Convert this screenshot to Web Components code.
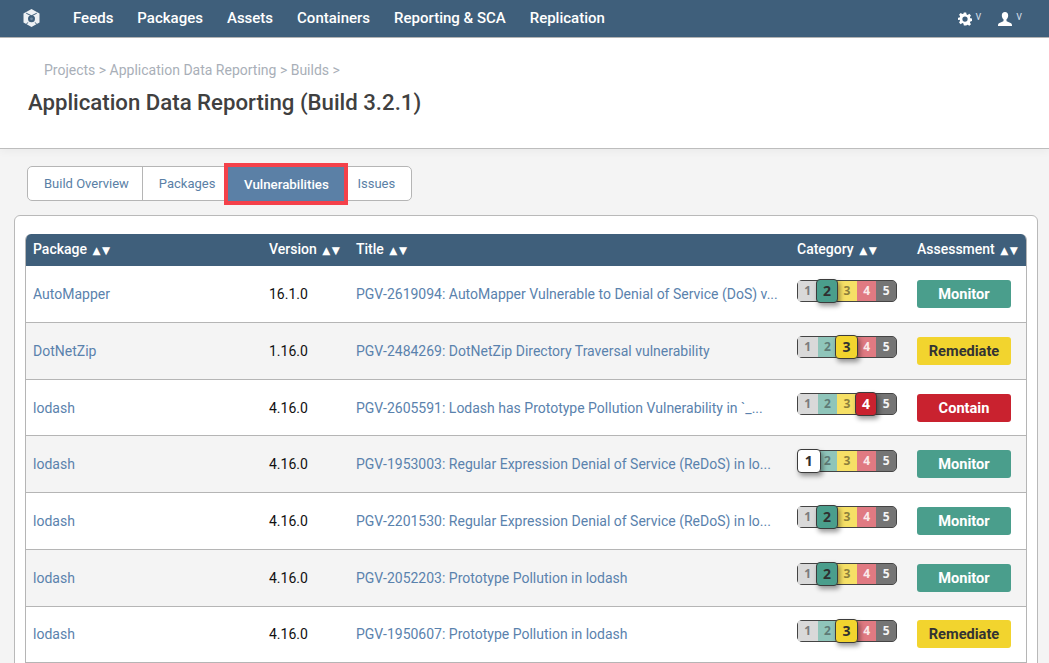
<!DOCTYPE html>
<html lang="en">
<head>
<meta charset="utf-8">
<title>Application Data Reporting</title>
<style>
  html, body { margin: 0; height: 100%; overflow: hidden; }
  body { background: #f4f4f4; font-family: Roboto, "Liberation Sans", sans-serif; }
</style>
</head>
<body>
<app-nav></app-nav>
<page-header></page-header>
<tab-bar></tab-bar>
<vuln-card>
  <vuln-head></vuln-head>
  <vuln-row package="AutoMapper" version="16.1.0" title="PGV-2619094: AutoMapper Vulnerable to Denial of Service (DoS) v..." category="2" assessment="Monitor"></vuln-row>
  <vuln-row package="DotNetZip" version="1.16.0" title="PGV-2484269: DotNetZip Directory Traversal vulnerability" category="3" assessment="Remediate" shaded></vuln-row>
  <vuln-row package="lodash" version="4.16.0" title="PGV-2605591: Lodash has Prototype Pollution Vulnerability in `_..." category="4" assessment="Contain"></vuln-row>
  <vuln-row package="lodash" version="4.16.0" title="PGV-1953003: Regular Expression Denial of Service (ReDoS) in lo..." category="1" assessment="Monitor" shaded></vuln-row>
  <vuln-row package="lodash" version="4.16.0" title="PGV-2201530: Regular Expression Denial of Service (ReDoS) in lo..." category="2" assessment="Monitor"></vuln-row>
  <vuln-row package="lodash" version="4.16.0" title="PGV-2052203: Prototype Pollution in lodash" category="2" assessment="Monitor" shaded></vuln-row>
  <vuln-row package="lodash" version="4.16.0" title="PGV-1950607: Prototype Pollution in lodash" category="3" assessment="Remediate"></vuln-row>
</vuln-card>

<script>
class AppNav extends HTMLElement {
  constructor() {
    super();
    const links = ["Feeds", "Packages", "Assets", "Containers", "Reporting & SCA", "Replication"];
    this.attachShadow({ mode: "open" }).innerHTML = `
    <style>
      :host { display: flex; align-items: center; height: 37px; background: #3f5f7b; border-bottom: 1px solid #b5b5b5; padding-left: 23px; padding-right: 27px; color: #fff; font: 500 15px Roboto, sans-serif; }
      .logo { width: 17px; height: 18px; margin-right: 33px; margin-top: -1px; }
      nav { display: flex; gap: 24px; flex: 1; margin-top: -2px; }
      .tool { display: flex; align-items: center; gap: 3px; margin-left: 16px; }
      .tool span { font-size: 12px; font-weight: 400; color: #c9d6e2; margin-top: -5px; }
    </style>
    <svg class="logo" viewBox="0 0 17 18">
      <path fill="#eef1f4" d="M8.500 0 16.500 4.600v8.800L8.500 18 .5 13.400V4.600Z"/>
      <path fill="none" stroke="#3f5f7b" stroke-width="1" d="M3.200 4.200 8.500 6.800 13.800 4.200M4.800 13.400 3.200 15.600M12.200 13.400l1.600 2.200"/>
      <circle cx="8.500" cy="9.800" r="3.500" fill="#3f5f7b"/>
      <circle cx="8.500" cy="9.800" r="1.400" fill="#6f889f"/>
    </svg>
    <nav>${links.map(l => `<span>${l.replace("&", "&amp;")}</span>`).join("")}</nav>
    <div class="tool">
      <svg width="14" height="14" viewBox="0 0 24 24"><path fill="#fff" fill-rule="evenodd" d="M10 1h4l.7 3.200 1.900.8 2.800-1.800 2.800 2.800-1.800 2.800.8 1.900 3.200.7v4l-3.200.7-.8 1.900 1.800 2.800-2.800 2.800-2.800-1.800-1.900.8L14 23h-4l-.7-3.200-1.900-.8-2.800 1.800-2.800-2.800 1.800-2.800-.8-1.900L-.4 14v-4l3.200-.7.800-1.900L1.800 4.600 4.600 1.800l2.800 1.800 1.900-.8ZM12 7.500a4.500 4.500 0 1 0 0 9 4.500 4.500 0 0 0 0-9Z"/></svg>
      <span>v</span>
    </div>
    <div class="tool">
      <svg width="16" height="14" viewBox="0 0 16 15"><path fill="#fff" d="M8 0c2.200 0 3.400 1.600 3.400 3.700 0 1.700-.8 3.300-1.800 4.100v1.600c0 .6 1 1 2.500 1.600 1.800.7 3.400 1.400 3.400 3.100V15H.5v-.9c0-1.700 1.600-2.400 3.400-3.100 1.500-.6 2.500-1 2.500-1.600V7.800c-1-.8-1.800-2.400-1.800-4.100C4.600 1.600 5.800 0 8 0Z"/></svg>
      <span>v</span>
    </div>`;
  }
}

class PageHeader extends HTMLElement {
  constructor() {
    super();
    this.attachShadow({ mode: "open" }).innerHTML = `
    <style>
      :host { display: block; height: 111px; box-sizing: border-box; background: #fff; border-bottom: 1px solid #bdbdbd; box-shadow: 0 3px 8px rgba(0,0,0,.04); padding: 23px 28px 0; }
      .crumbs { font-size: 14px; line-height: 18px; color: #a9afb8; padding-left: 16px; }
      h1 { margin: 9px 0 0; font: 500 22.2px/28px Roboto, sans-serif; color: #404040; }
    </style>
    <div class="crumbs">Projects &gt; Application Data Reporting &gt; Builds &gt;</div>
    <h1>Application Data Reporting (Build 3.2.1)</h1>`;
  }
}

class TabBar extends HTMLElement {
  constructor() {
    super();
    this.attachShadow({ mode: "open" }).innerHTML = `
    <style>
      :host { display: flex; width: max-content; height: 35px; margin: 17px 0 0 27px; box-sizing: border-box; background: #fff; border: 1px solid #b5b5b5; border-radius: 5px; font-size: 13px; color: #5a7fa6; }
      span { display: flex; align-items: center; padding: 0 13px 0 16px; }
      span + span { border-left: 1px solid #b5b5b5; }
      .on { position: relative; box-sizing: border-box; width: 116px; justify-content: center; background: #5b80a6; color: #fff; font-size: 13.3px; font-weight: 500; padding: 0; border: 0; outline: 4px solid #f4414a; margin-bottom: -1px; }
      .on + span { border-left: 0; padding: 0 16px 0 13px; }
    </style>
    <span>Build Overview</span><span>Packages</span><span class="on">Vulnerabilities</span><span>Issues</span>`;
  }
}

class VulnCard extends HTMLElement {
  constructor() {
    super();
    this.attachShadow({ mode: "open" }).innerHTML = `
    <style>
      :host { display: block; margin: 14px 11px 0 14px; padding: 18px 10px 0 10px; background: #fff; border: 1px solid #b9b9b9; border-radius: 6px 6px 0 0; height: 600px; box-sizing: border-box; }
      .table { border: 1px solid #b5b5b5; border-top: 0; border-radius: 6px 6px 0 0; overflow: hidden; }
    </style>
    <div class="table"><slot></slot></div>`;
  }
}

const COLUMNS = "grid-template-columns: 236px 87px 441px 120px 1fr;";

class VulnHead extends HTMLElement {
  constructor() {
    super();
    const cols = ["Package", "Version", "Title", "Category", "Assessment"];
    this.attachShadow({ mode: "open" }).innerHTML = `
    <style>
      :host { display: grid; ${COLUMNS} height: 32.4px; padding-bottom: 3px; box-sizing: border-box; align-items: center; background: #3f5f7b; color: #fff; font-size: 14px; font-weight: 500; }
      div { padding-left: 7px; white-space: nowrap; }
      i { font-style: normal; font-size: 10.5px; margin-left: 2px; letter-spacing: 1.5px; font-family: "DejaVu Sans", sans-serif; }
    </style>
    ${cols.map(c => `<div>${c} <i>&#9650;&#9660;</i></div>`).join("")}`;
  }
}

class VulnRow extends HTMLElement {
  connectedCallback() {
    if (this.shadowRoot) return;
    const get = n => this.getAttribute(n);
    this.attachShadow({ mode: "open" }).innerHTML = `
    <style>
      :host { display: grid; ${COLUMNS} height: 56.7px; box-sizing: border-box; align-items: center; background: #fff; border-bottom: 1px solid #b5b5b5; font-size: 14px; color: #111; }
      :host([shaded]) { background: #f4f4f4; }
      div { padding-left: 7px; white-space: nowrap; overflow: hidden; }
      div.free { overflow: visible; }
      .link { color: #5a82ad; }
    </style>
    <div class="link">${get("package")}</div>
    <div>${get("version")}</div>
    <div class="link">${get("title")}</div>
    <div class="free"><category-scale value="${get("category")}"></category-scale></div>
    <div class="free"><assess-badge kind="${get("assessment")}"></assess-badge></div>`;
  }
}

class CategoryScale extends HTMLElement {
  connectedCallback() {
    if (this.shadowRoot) return;
    const value = +this.getAttribute("value");
    this.attachShadow({ mode: "open" }).innerHTML = `
    <style>
      :host { display: grid; grid-template-columns: repeat(5, 1fr); width: 100px; height: 22px; box-sizing: border-box; border: 1px solid #444; border-radius: 5px; margin-top: -7px; background: #757575; font: 700 12px/20px "Open Sans", sans-serif; }
      span { display: flex; align-items: center; justify-content: center; }
      span:first-child { border-radius: 4px 0 0 4px; }
      span:last-child { border-radius: 0 4px 4px 0; }
      .c1 { background: #d9d9d9; color: #7b7b7b; }
      .c2 { background: #8fc5ba; color: #5e7b76; }
      .c3 { background: #f6e066; color: #8c7f3c; }
      .c4 { background: #e07a82; color: #fbeaea; }
      .c5 { background: #757575; color: #f4f4f4; }
      .sel { position: relative; z-index: 1; margin: -2px -1px -2px -2px; border: 1px solid #3c3c3c; border-radius: 4px !important; box-shadow: 2px 3px 5px rgba(0,0,0,.4); font-size: 14px; color: #303030; }
      .sel.c1 { background: #fff; margin-left: -1px; margin-right: -3px; }
      .sel.c2 { background: #4a9e8c; }
      .sel.c3 { background: #f2d42e; }
      .sel.c4 { background: #c9222f; color: #fff; }
    </style>
    ${[1, 2, 3, 4, 5].map(n => `<span class="c${n}${n === value ? " sel" : ""}">${n}</span>`).join("")}`;
  }
}

class AssessBadge extends HTMLElement {
  connectedCallback() {
    if (this.shadowRoot) return;
    const kind = this.getAttribute("kind");
    const styles = { Monitor: "#4a9e8c;color:#fff", Remediate: "#f2d42e;color:#333", Contain: "#c9222f;color:#fff" };
    this.attachShadow({ mode: "open" }).innerHTML = `
    <style>
      :host { display: flex; align-items: center; justify-content: center; width: 94px; height: 28px; border-radius: 3px; font-size: 14.6px; font-weight: 700; background: ${styles[kind]}; }
    </style>
    ${kind}`;
  }
}

customElements.define("app-nav", AppNav);
customElements.define("page-header", PageHeader);
customElements.define("tab-bar", TabBar);
customElements.define("vuln-card", VulnCard);
customElements.define("vuln-head", VulnHead);
customElements.define("vuln-row", VulnRow);
customElements.define("category-scale", CategoryScale);
customElements.define("assess-badge", AssessBadge);
</script>
</body>
</html>
